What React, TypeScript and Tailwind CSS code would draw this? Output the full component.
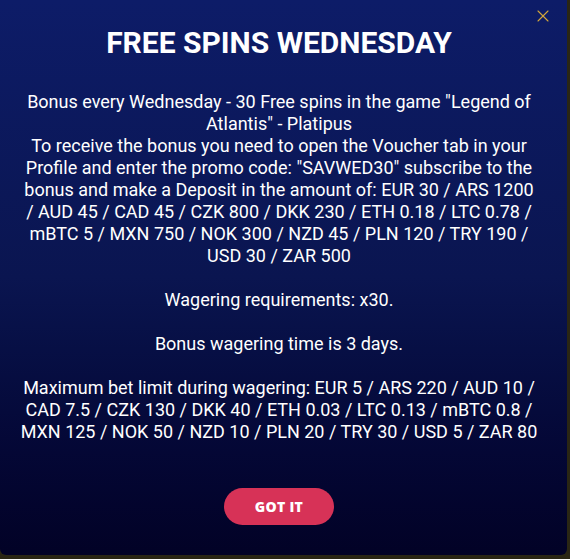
import { X } from 'lucide-react';

export default function App() {
  return (
    <div className="h-[559px] w-[570px] bg-[#2a2614] overflow-hidden">
      <div className="relative flex h-[555px] w-[567px] flex-col items-center rounded-b-md bg-gradient-to-b from-[#0d1c68] via-[#0a1550] to-[#020226] pl-[20px] pr-[29px] font-['Roboto',sans-serif] text-white">
        <button className="absolute left-[533px] top-[6px] text-[#d4a63a]" aria-label="Close">
          <X className="h-[20px] w-[20px]" strokeWidth={1.3} />
        </button>
        <h1 className="mt-[25px] text-[30px] font-bold leading-[36px]">FREE SPINS WEDNESDAY</h1>
        <p className="mt-[30px] text-center text-[18px] leading-[22px]">
          Bonus every Wednesday - 30 Free spins in the game "Legend of Atlantis" - Platipus
          <br />
          To receive the bonus you need to open the Voucher tab in your Profile and enter the promo code: "SAVWED30" subscribe to the bonus and make a Deposit in the amount of: EUR 30 / ARS 1200 / AUD 45 / CAD 45 / CZK 800 / DKK 230 / ETH 0.18 / LTC 0.78 / mBTC 5 / MXN 750 / NOK 300 / NZD 45 / PLN 120 / TRY 190 / USD 30 / ZAR 500
          <br />
          <br />
          Wagering requirements: x30.
          <br />
          <br />
          Bonus wagering time is 3 days.
          <br />
          <br />
          Maximum bet limit during wagering: EUR 5 / ARS 220 / AUD 10 / CAD 7.5 / CZK 130 / DKK 40 / ETH 0.03 / LTC 0.13 / mBTC 0.8 / MXN 125 / NOK 50 / NZD 10 / PLN 20 / TRY 30 / USD 5 / ZAR 80
        </p>
        <button className="mt-[45px] flex h-[37px] w-[110px] items-center justify-center rounded-full bg-[#d73257] font-['Open_Sans',sans-serif] text-[14px] font-extrabold tracking-[0.3px] text-white">
          GOT IT
        </button>
      </div>
    </div>
  );
}
